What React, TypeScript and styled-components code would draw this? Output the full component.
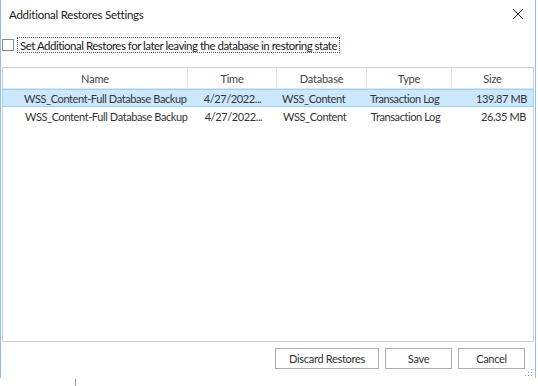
import React from "react";
import styled, { createGlobalStyle } from "styled-components";

const GlobalStyle = createGlobalStyle`
  html, body { margin: 0; padding: 0; background: #ffffff; }
  body { font-family: "Lato", "Noto Sans", "Liberation Sans", sans-serif; color: #333; }
  * { box-sizing: border-box; }
`;

const Page = styled.div`
  width: 538px;
  height: 386px;
  overflow: hidden;
  background: #fff;
`;

const Window = styled.div`
  width: 536px;
  height: 378px;
  border-left: 1px solid #8cc1ee;
  border-right: 1px solid #8cc1ee;
  background: #fff;
  display: flex;
  flex-direction: column;
  position: relative;
`;

const TitleBar = styled.div`
  height: 28px;
  display: flex;
  align-items: center;
  justify-content: space-between;
  padding-left: 8px;
`;

const Title = styled.div`
  font-size: 11.5px;
  color: #1a1a1a;
  letter-spacing: -0.25px;
`;

const CloseButton = styled.div`
  width: 34px;
  height: 28px;
  display: flex;
  align-items: center;
  justify-content: center;
`;

const CheckRow = styled.div`
  display: flex;
  align-items: center;
  margin-top: 9px;
  margin-left: 1px;
  height: 16px;
`;

const CheckBox = styled.div`
  width: 12px;
  height: 12px;
  border: 1px solid #8a8a8a;
  background: #fff;
`;

const CheckLabel = styled.div`
  margin-left: 3px;
  height: 16px;
  width: 323px;
  border: 1px dotted #555;
  display: flex;
  align-items: center;
  padding-left: 2px;
  font-size: 11.5px;
  letter-spacing: -0.5px;
  color: #1a1a1a;
  white-space: nowrap;
`;

const Table = styled.div`
  margin: 14px 1px 0 1px;
  height: 275px;
  border: 1px solid #cfcfcf;
  background: #fff;
  display: flex;
  flex-direction: column;
`;

const GridRow = styled.div<{ $selected?: boolean; $header?: boolean }>`
  display: grid;
  grid-template-columns: 185px 89px 90px 85px 1fr;
  height: ${(p) => (p.$header ? "21px" : "18px")};
  background: ${(p) => (p.$selected ? "#cce8ff" : "#fff")};
  border: 1px solid ${(p) => (p.$selected ? "#99d1ff" : "transparent")};
  border-bottom-color: ${(p) => (p.$header ? "#e5e5e5" : p.$selected ? "#99d1ff" : "transparent")};
  margin: ${(p) => (p.$selected ? "0 -1px 0 -1px" : "0")};
  ${(p) => (p.$header ? "border-top: none; border-left: none; border-right: none;" : "")}
`;

const HeaderCell = styled.div`
  display: flex;
  align-items: center;
  justify-content: center;
  font-size: 11px;
  letter-spacing: -0.2px;
  color: #444;
  border-right: 1px solid #e5e5e5;
  &:last-child { border-right: none; }
`;

const Cell = styled.div<{ $align: "left" | "center" | "right"; $pad: number }>`
  display: flex;
  align-items: center;
  justify-content: ${(p) =>
    p.$align === "left" ? "flex-start" : p.$align === "right" ? "flex-end" : "center"};
  padding-left: ${(p) => (p.$align === "left" ? p.$pad : 0)}px;
  padding-right: ${(p) => (p.$align === "right" ? p.$pad : 0)}px;
  font-size: 11px;
  color: #333;
  white-space: nowrap;
  overflow: hidden;
  letter-spacing: -0.4px;
`;

const Footer = styled.div`
  display: flex;
  justify-content: flex-end;
  gap: 6px;
  margin-top: 6px;
  padding-right: 10px;
`;

const Button = styled.div<{ $w: number }>`
  width: ${(p) => p.$w}px;
  height: 21px;
  border: 1px solid #adadad;
  background: #fff;
  display: flex;
  align-items: center;
  justify-content: center;
  font-size: 11px;
  color: #333;
  letter-spacing: -0.3px;
`;

const Grip = styled.svg`
  position: absolute;
  right: 2px;
  bottom: 1px;
`;

const Tick = styled.div`
  margin-left: 75px;
  margin-top: 1px;
  width: 1px;
  height: 7px;
  background: #9a9a9a;
`;

type Row = { name: string; time: string; db: string; type: string; size: string; selected?: boolean };

const rows: Row[] = [
  {
    name: "WSS_Content-Full Database Backup",
    time: "4/27/2022...",
    db: "WSS_Content",
    type: "Transaction Log",
    size: "139.87 MB",
    selected: true,
  },
  {
    name: "WSS_Content-Full Database Backup",
    time: "4/27/2022...",
    db: "WSS_Content",
    type: "Transaction Log",
    size: "26.35 MB",
  },
];

export default function App() {
  return (
    <Page>
      <GlobalStyle />
      <Window>
        <TitleBar>
          <Title>Additional Restores Settings</Title>
          <CloseButton>
            <svg width="12" height="12" viewBox="0 0 12 12">
              <path d="M1 1 L11 11 M11 1 L1 11" stroke="#222" strokeWidth="1" fill="none" />
            </svg>
          </CloseButton>
        </TitleBar>
        <CheckRow>
          <CheckBox />
          <CheckLabel>Set Additional Restores for later leaving the database in restoring state</CheckLabel>
        </CheckRow>
        <Table>
          <GridRow $header>
            <HeaderCell>Name</HeaderCell>
            <HeaderCell>Time</HeaderCell>
            <HeaderCell>Database</HeaderCell>
            <HeaderCell>Type</HeaderCell>
            <HeaderCell>Size</HeaderCell>
          </GridRow>
          {rows.map((r, i) => (
            <GridRow key={i} $selected={r.selected}>
              <Cell $align="left" $pad={21}>{r.name}</Cell>
              <Cell $align="center" $pad={0}>{r.time}</Cell>
              <Cell $align="left" $pad={5}>{r.db}</Cell>
              <Cell $align="left" $pad={3}>{r.type}</Cell>
              <Cell $align="right" $pad={6}>{r.size}</Cell>
            </GridRow>
          ))}
        </Table>
        <Footer>
          <Button $w={104}>Discard Restores</Button>
          <Button $w={67}>Save</Button>
          <Button $w={67}>Cancel</Button>
        </Footer>
        <Grip width="8" height="8" viewBox="0 0 8 8">
          <rect x="6" y="0" width="1" height="1" fill="#999" />
          <rect x="3" y="3" width="1" height="1" fill="#999" />
          <rect x="6" y="3" width="1" height="1" fill="#999" />
          <rect x="0" y="6" width="1" height="1" fill="#999" />
          <rect x="3" y="6" width="1" height="1" fill="#999" />
          <rect x="6" y="6" width="1" height="1" fill="#999" />
        </Grip>
      </Window>
      <Tick />
    </Page>
  );
}
